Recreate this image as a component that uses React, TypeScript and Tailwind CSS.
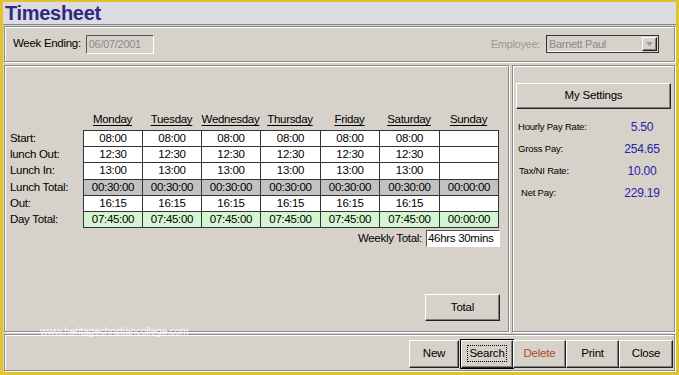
const DAYS = ["Monday", "Tuesday", "Wednesday", "Thursday", "Friday", "Saturday", "Sunday"];
const COL_W = [59, 59, 59, 60, 59, 60, 59];

type Row = { label: string; values: string[]; tone?: "gray" | "green" };

const ROWS: Row[] = [
  { label: "Start:", values: ["08:00", "08:00", "08:00", "08:00", "08:00", "08:00", ""] },
  { label: "lunch Out:", values: ["12:30", "12:30", "12:30", "12:30", "12:30", "12:30", ""] },
  { label: "Lunch In:", values: ["13:00", "13:00", "13:00", "13:00", "13:00", "13:00", ""] },
  {
    label: "Lunch Total:",
    values: ["00:30:00", "00:30:00", "00:30:00", "00:30:00", "00:30:00", "00:30:00", "00:00:00"],
    tone: "gray",
  },
  { label: "Out:", values: ["16:15", "16:15", "16:15", "16:15", "16:15", "16:15", ""] },
  {
    label: "Day Total:",
    values: ["07:45:00", "07:45:00", "07:45:00", "07:45:00", "07:45:00", "07:45:00", "00:00:00"],
    tone: "green",
  },
];

const PAY = [
  { label: "Hourly Pay Rate:", value: "5.50", pad: 2 },
  { label: "Gross Pay:", value: "254.65", pad: 2 },
  { label: "Tax/NI Rate:", value: "10.00", pad: 3 },
  { label: "Net Pay:", value: "229.19", pad: 5 },
];

const raised =
  "bg-[#d6d2ca] border-t border-l border-t-white border-l-white border-b border-r border-b-[#222] border-r-[#222] shadow-[inset_-1px_-1px_0_#808080]";
const sunken =
  "border-t border-l border-t-[#555] border-l-[#555] border-b border-r border-b-white border-r-white";
const etched = "border border-[#8a8a8a] shadow-[inset_1px_1px_0_#fff,1px_1px_0_#fff]";

function WinButton({
  children,
  className = "",
  focused = false,
}: {
  children: React.ReactNode;
  className?: string;
  focused?: boolean;
}) {
  return (
    <div
      className={`${raised} ${focused ? "outline outline-1 outline-black" : ""} flex items-center justify-center text-[11.5px] tracking-[-0.2px] ${className}`}
    >
      {focused ? (
        <span className="border border-dotted border-black px-[1px] leading-[15px]">{children}</span>
      ) : (
        children
      )}
    </div>
  );
}

export default function App() {
  return (
    <div
      className="w-[679px] h-[375px] bg-[#e2c32c] pt-[2px] pl-[3px] pr-[3px] pb-[3px] text-black"
      style={{ fontFamily: '"Liberation Sans", Arial, sans-serif' }}
    >
      <div className="relative flex flex-col h-full bg-[#d6d2ca]">
        {/* title */}
        <div className="h-[23px] bg-[#dddbe2] flex items-center pl-[2px] border-b border-[#8a8a8a]">
          <span className="text-[20px] font-bold text-[#2e2a80] leading-none tracking-[-0.3px]">Timesheet</span>
        </div>

        {/* header */}
        <div className={`h-[36px] mt-[1px] mx-[1px] flex items-center pl-[8px] ${etched} tracking-[-0.3px]`}>
          <span className="text-[11.5px]">Week Ending:</span>
          <div
            className={`ml-[5px] w-[68px] h-[19px] bg-[#d6d2ca] ${sunken} text-[11px] text-[#8a8a8a] flex items-center pl-[2px]`}
          >
            06/07/2001
          </div>
          <div className="flex-1" />
          <span className="text-[11px] text-[#9a9a9a] mr-[6px]">Employee:</span>
          <div className="w-[113px] h-[18px] bg-[#d6d2ca] border border-[#333] flex items-center mr-[15px]">
            <span className="flex-1 text-[11px] text-[#8a8a8a] pl-[2px] border-b border-white h-full leading-[16px]">
              Barnett Paul
            </span>
            <div className={`w-[15px] h-[14px] mr-[1px] ${raised} flex items-center justify-center`}>
              <svg width="7" height="4" viewBox="0 0 7 4">
                <path d="M0 0h7L3.5 4z" fill="#9a9a9a" />
              </svg>
            </div>
          </div>
        </div>

        {/* main */}
        <div className="flex-1 flex mt-[3px] mx-[1px] gap-[3px]">
          {/* left panel */}
          <div className={`w-[505px] flex flex-col ${etched} pl-[5px] tracking-[-0.3px]`}>
            <div className="flex mt-[45px]">
              <div className="w-[73px]" />
              {DAYS.map((d, i) => (
                <div
                  key={d}
                  className="text-center text-[11.5px] underline underline-offset-[2px] h-[19px]"
                  style={{ width: COL_W[i] }}
                >
                  {d}
                </div>
              ))}
            </div>
            <div className="flex">
              <div className="w-[73px] flex flex-col text-[11.5px]">
                {ROWS.map((r) => (
                  <div key={r.label} className="h-[16.2px] leading-[16px] whitespace-nowrap">
                    {r.label}
                  </div>
                ))}
              </div>
              <div className="border-t border-l border-[#333]">
                {ROWS.map((r) => (
                  <div
                    key={r.label}
                    className={`flex ${r.tone === "gray" ? "bg-[#c2c2c2]" : r.tone === "green" ? "bg-[#d4f5d2]" : "bg-white"}`}
                  >
                    {r.values.map((v, i) => (
                      <div
                        key={i}
                        className="h-[16.2px] border-r border-b border-[#333] text-center text-[11.5px] leading-[15px]"
                        style={{ width: COL_W[i] }}
                      >
                        {v}
                      </div>
                    ))}
                  </div>
                ))}
              </div>
            </div>
            <div className="flex items-center justify-end mt-[2px] pr-[8px]">
              <span className="text-[11.5px] mr-[4px]">Weekly Total:</span>
              <div
                className={`w-[74px] h-[17px] bg-white ${sunken} text-[11.5px] leading-[15px] pl-[1px] whitespace-nowrap`}
              >
                46hrs 30mins
              </div>
            </div>
            <div className="flex justify-end mt-[47px] pr-[8px]">
              <WinButton className="w-[75px] h-[27px]">Total</WinButton>
            </div>
          </div>

          {/* right panel */}
          <div className={`flex-1 flex flex-col ${etched} px-[3px]`}>
            <WinButton className="mt-[17px] h-[26px] w-[155px]">My Settings</WinButton>
            <div className="mt-[12px] flex flex-col gap-[10px] tracking-[-0.2px]">
              {PAY.map((p) => (
                <div key={p.label} className="flex items-center h-[12px]">
                  <span className="text-[9.5px] w-[103px] whitespace-nowrap" style={{ paddingLeft: p.pad }}>
                    {p.label}
                  </span>
                  <span className="w-[46px] text-center text-[12px] text-[#2424a8]">{p.value}</span>
                </div>
              ))}
            </div>
          </div>
        </div>

        {/* bottom bar */}
        <div className={`h-[37px] mt-[2px] mx-[1px] mb-[1px] flex items-center justify-end pr-[1px] pt-[2px] ${etched}`}>
          <WinButton className="w-[50px] h-[28px]">New</WinButton>
          <WinButton focused className="w-[52px] h-[28px] ml-[2px]">
            Search
          </WinButton>
          <WinButton className="w-[53px] h-[28px] text-[#b04a2a]">Delete</WinButton>
          <WinButton className="w-[53px] h-[28px]">Print</WinButton>
          <WinButton className="w-[54px] h-[28px]">Close</WinButton>
        </div>

        <span className="absolute left-[37px] top-[322px] text-[10.5px] text-white/80 tracking-[-0.3px]">
          www.heritagechristiancollege.com
        </span>
      </div>
    </div>
  );
}
